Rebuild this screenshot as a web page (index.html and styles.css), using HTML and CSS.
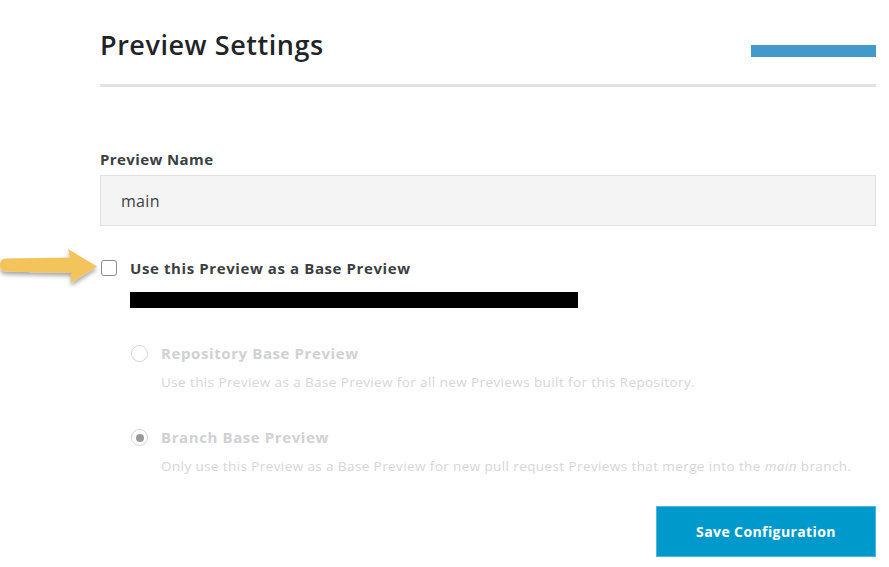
FILE: index.html
```html
<!DOCTYPE html>
<html>
<head>
<meta charset="utf-8">
<link rel="stylesheet" href="styles.css">
</head>
<body>
<div class="page">
  <header class="header">
    <h1 class="title">Preview Settings</h1>
    <div class="accent-bar"></div>
  </header>
  <div class="rule"></div>

  <div class="field">
    <label class="field-label">Preview Name</label>
    <div class="input">main</div>
  </div>

  <div class="base-row">
    <svg class="arrow" width="104" height="48" viewBox="0 0 104 48">
      <defs>
        <filter id="sh" x="-10%" y="-20%" width="130%" height="160%">
          <feDropShadow dx="0" dy="3" stdDeviation="2" flood-color="#000" flood-opacity="0.35"/>
        </filter>
      </defs>
      <path filter="url(#sh)" fill="#f4c45c" d="M6 12.5 L70 11.5 L68 3 L97 20.5 L71 37 L71 27 L6 25.5 C1 25.3 0 22 0 19 C0 15 2 12.6 6 12.5 Z"/>
    </svg>
    <span class="checkbox"></span>
    <span class="base-label">Use this Preview as a Base Preview</span>
  </div>
  <div class="redacted"></div>

  <div class="options">
    <div class="option">
      <span class="radio"></span>
      <div class="option-body">
        <div class="option-title">Repository Base Preview</div>
        <div class="option-desc">Use this Preview as a Base Preview for all new Previews built for this Repository.</div>
      </div>
    </div>
    <div class="option">
      <span class="radio checked"></span>
      <div class="option-body">
        <div class="option-title">Branch Base Preview</div>
        <div class="option-desc">Only use this Preview as a Base Preview for new pull request Previews that merge into the <em>main</em> branch.</div>
      </div>
    </div>
  </div>

  <div class="actions">
    <button class="save">Save Configuration</button>
  </div>
</div>
</body>
</html>
```

FILE: styles.css
```css
* { box-sizing: border-box; }
html, body { margin: 0; padding: 0; background: #fff; }
body { font-family: "Open Sans", "Liberation Sans", sans-serif; color: #2b2f33; }

.page {
  width: 889px;
  height: 567px;
  padding: 0 13px 0 100px;
  overflow: hidden;
}

.header {
  display: flex;
  justify-content: space-between;
  align-items: flex-start;
  padding-top: 25px;
  height: 84px;
}
.title {
  margin: 0;
  font-size: 27px;
  line-height: 40px;
  font-weight: 600;
  color: #1f2428;
  letter-spacing: 0.55px;
}
.accent-bar {
  width: 125px;
  height: 12px;
  margin-top: 20px;
  background: #4499cc;
}
.rule {
  height: 3px;
  background: #e2e2e2;
}

.field { margin-top: 61px; }
.field-label {
  display: block;
  font-size: 15px;
  font-weight: 700;
  line-height: 22px;
  color: #3a3f43;
  letter-spacing: 0.4px;
}
.input {
  margin-top: 5px;
  height: 51px;
  border: 1px solid #e2e2e2;
  background: #f4f4f4;
  padding: 0 20px;
  display: flex;
  align-items: center;
  font-size: 16px;
  color: #3a3f43;
  letter-spacing: 0.3px;
}

.base-row {
  position: relative;
  display: flex;
  align-items: center;
  gap: 13px;
  margin-top: 32px;
  height: 20px;
}
.arrow {
  position: absolute;
  left: -100px;
  top: -12px;
}
.checkbox {
  width: 16px;
  height: 16px;
  margin-left: 1px;
  border: 1.5px solid #8a8a8a;
  border-radius: 3px;
  background: #fff;
}
.base-label {
  font-size: 15px;
  font-weight: 700;
  color: #3a3f43;
  letter-spacing: 0.6px;
}
.redacted {
  margin: 14px 0 0 30px;
  width: 448px;
  height: 16px;
  background: #000;
}

.options {
  margin-top: 33px;
  padding-left: 31px;
  display: flex;
  flex-direction: column;
  gap: 34px;
}
.option {
  display: flex;
  gap: 13px;
}
.radio {
  width: 17px;
  height: 17px;
  margin-top: 4px;
  border-radius: 50%;
  border: 1.5px solid #d4d4d4;
  display: flex;
  align-items: center;
  justify-content: center;
}
.radio.checked::after {
  content: "";
  width: 8px;
  height: 8px;
  border-radius: 50%;
  background: #9a9a9a;
}
.option-title {
  font-size: 15px;
  font-weight: 700;
  line-height: 24px;
  color: #cfd1d3;
  letter-spacing: 0.6px;
}
.option-desc {
  margin-top: 8px;
  font-size: 13.5px;
  line-height: 18px;
  color: #d6d6d6;
  letter-spacing: 0.4px;
}
.option-desc em { font-style: italic; }

.actions {
  display: flex;
  justify-content: flex-end;
  margin-top: 31px;
}
.save {
  width: 220px;
  height: 51px;
  border: 1px solid #4fb6dc;
  background: #0099cc;
  color: #fff;
  font-family: inherit;
  font-size: 14px;
  font-weight: 700;
  letter-spacing: 0.4px;
}
```
